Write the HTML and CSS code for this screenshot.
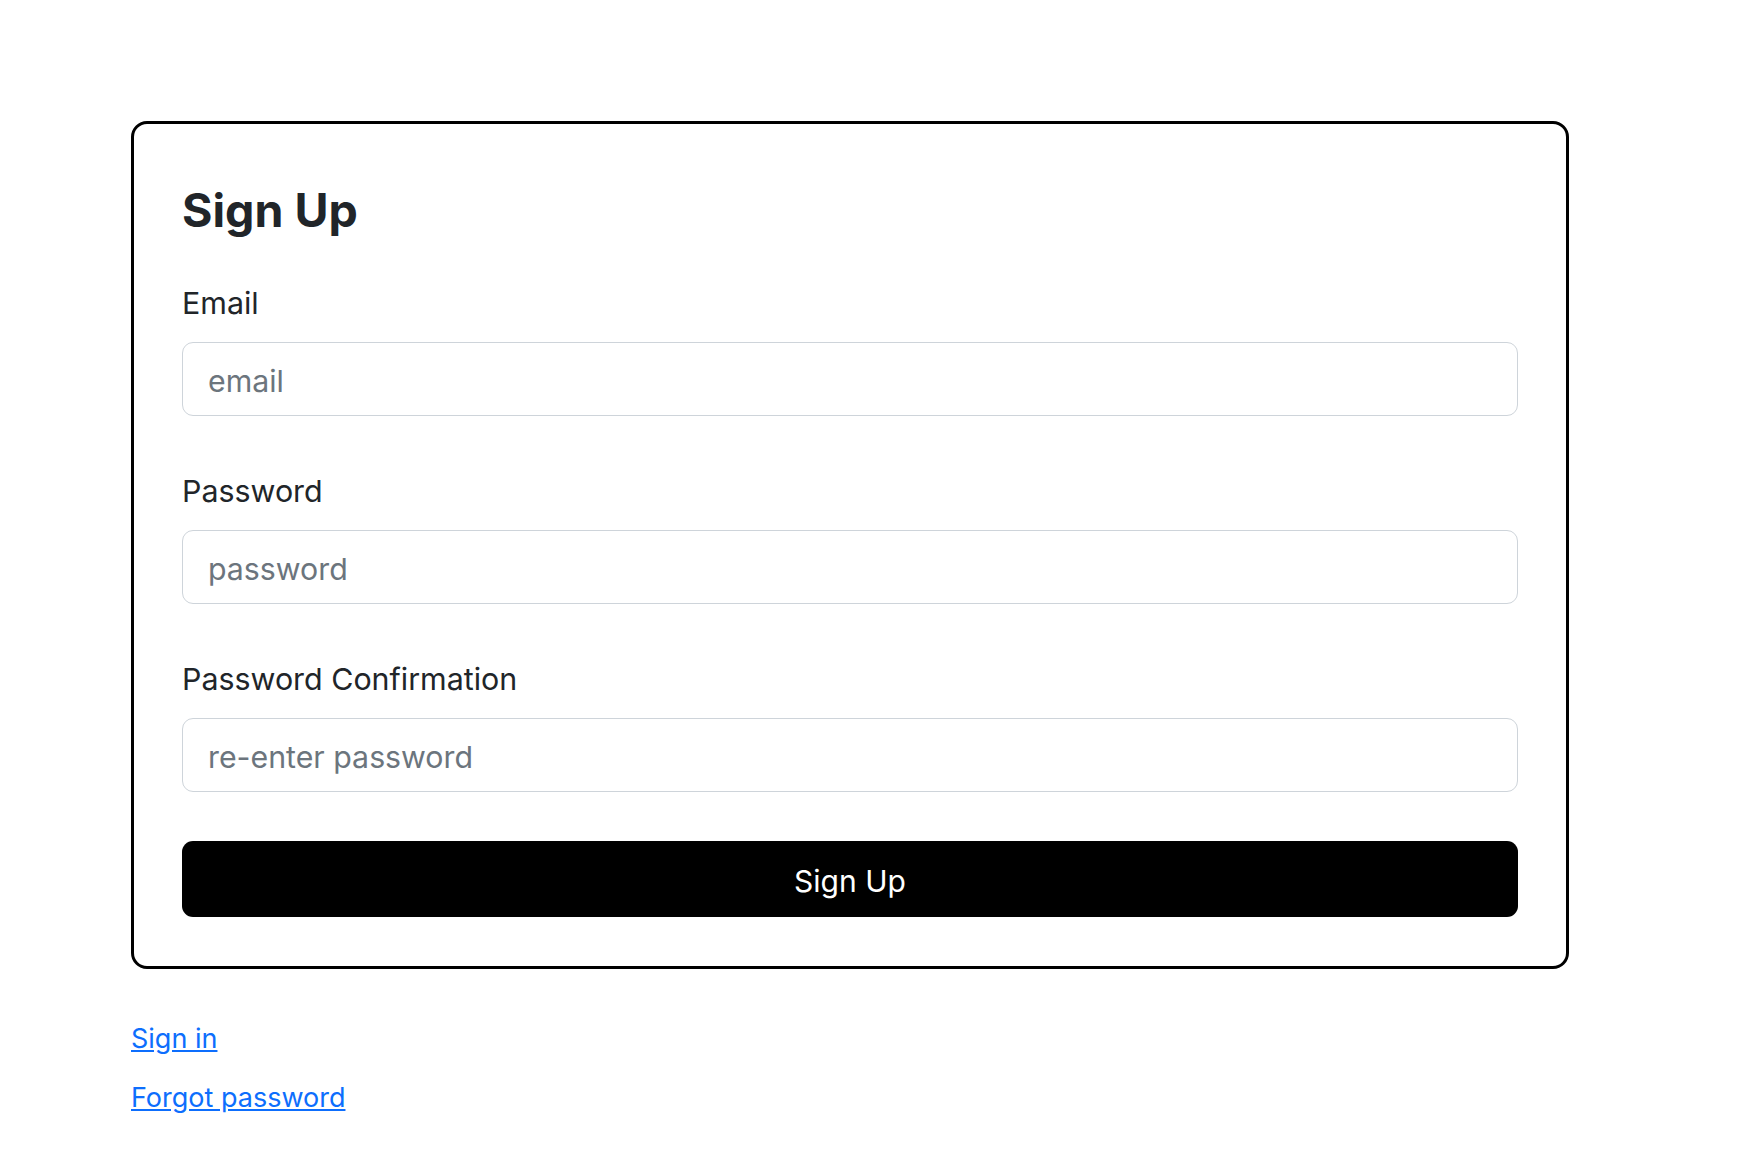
FILE: index.html
```html
<!DOCTYPE html>
<html lang="en">
<head>
<meta charset="utf-8">
<title>Sign Up</title>
<link rel="stylesheet" href="styles.css">
</head>
<body>
<main class="page">
  <section class="card">
    <h2 class="card-title">Sign Up</h2>
    <form class="form">
      <div class="field">
        <label class="label" for="email">Email</label>
        <input class="input" id="email" type="email" placeholder="email">
      </div>
      <div class="field">
        <label class="label" for="password">Password</label>
        <input class="input" id="password" type="password" placeholder="password">
      </div>
      <div class="field">
        <label class="label" for="password-confirmation">Password Confirmation</label>
        <input class="input" id="password-confirmation" type="password" placeholder="re-enter password">
      </div>
      <button class="btn" type="button">Sign Up</button>
    </form>
  </section>
  <nav class="links">
    <a class="link" href="#">Sign in</a>
    <a class="link" href="#">Forgot password</a>
  </nav>
</main>
</body>
</html>
```
FILE: styles.css
```css
* { box-sizing: border-box; }
html, body { margin: 0; padding: 0; background: #fff; }
body {
  font-family: Inter, "Noto Sans", "Liberation Sans", sans-serif;
  color: #212529;
}
.page {
  padding: 121px 0 0 131px;
  width: 1569px;
}
.card {
  border: 3px solid #000;
  border-radius: 16px;
  padding: 49px 48px 49px;
}
.card-title {
  margin: 0 0 34px;
  font-size: 46.5px;
  line-height: 74px;
  font-weight: 700;
  color: #212529;
}
.form { display: flex; flex-direction: column; }
.field { display: flex; flex-direction: column; margin-bottom: 53px; }
.field:last-of-type { margin-bottom: 49px; }
.label {
  font-size: 30.4px;
  line-height: 45px;
  margin-bottom: 16px;
  color: #212529;
}
.input {
  height: 74px;
  border: 1.5px solid #ced4da;
  border-radius: 11px;
  padding: 3px 25px 0;
  font-family: inherit;
  font-size: 30.3px;
  color: #212529;
  background: #fff;
  outline: none;
}
.input::placeholder { color: #6c757d; opacity: 1; }
.btn {
  height: 76px;
  border: 0;
  border-radius: 11px;
  padding: 3px 0 0;
  background: #000;
  color: #fff;
  font-family: inherit;
  font-size: 30px;
  cursor: pointer;
}
.links {
  display: flex;
  flex-direction: column;
  align-items: flex-start;
  gap: 18px;
  padding-top: 49px;
}
.link {
  font-size: 27px;
  line-height: 41px;
  color: #0d6efd;
}
```
